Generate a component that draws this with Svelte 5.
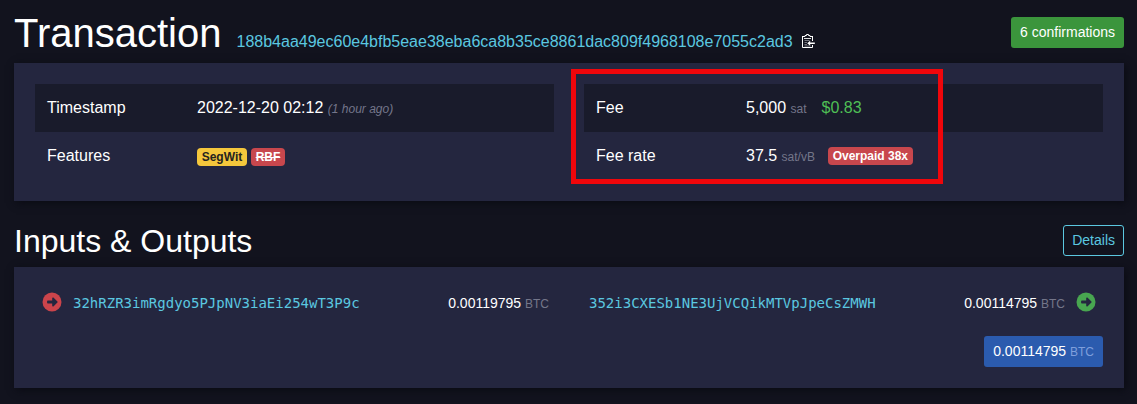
<script>
  const tx = {
    txid: '188b4aa49ec60e4bfb5eae38eba6ca8b35ce8861dac809f4968108e7055c2ad3',
    time: '2022-12-20 02:12',
    ago: '1 hour ago',
    confirmations: 6,
    fee: 5000,
    fiat: '$0.83',
    feeRate: 37.5,
    overpaid: 38
  };

  const inputs = [{ address: '32hRZR3imRgdyo5PJpNV3iaEi254wT3P9c', value: '0.00119795' }];
  const outputs = [{ address: '352i3CXESb1NE3UjVCQikMTVpJpeCsZMWH', value: '0.00114795' }];
  const total = '0.00114795';
</script>

{#snippet arrow(kind)}
  <svg class="arrow {kind}" viewBox="0 0 20 20">
    <circle cx="10" cy="10" r="9.500" />
    <path d="M5.800 8.600h4.400V6.200c0-.8.7-1 1.200-.6l4 3.800c.4.3.4.9 0 1.200l-4 3.800c-.5.4-1.200.2-1.200-.6v-2.400H5.800c-.4 0-.7-.3-.7-.7V9.300c0-.4.3-.7.7-.7z" fill="#24263f" />
  </svg>
{/snippet}

<main>
  <header class="title">
    <h1>Transaction</h1>
    <a class="txid" href="#tx">{tx.txid}</a>
    <svg class="clipboard" viewBox="0 0 14 15">
      <path d="M1.500 3v10.500h10V11M11.500 7V3" fill="none" stroke="#fff" />
      <path d="M1 2.500h3v-1h1.500V.5h2v1H9v1h3" fill="none" stroke="#fff" />
      <path d="M3 4.500h7" stroke="#ddd" />
      <path d="M3.500 6.500h5M3.500 8.500H6M3.500 10.500H6M3.500 12h6" stroke="#8d8e96" stroke-width=".8" />
      <path d="M6.200 9.300l3-2.500v1.800h4.600v1.400H9.200v1.800z" fill="#fff" />
    </svg>
    <button class="btn confirmed">{tx.confirmations} confirmations</button>
  </header>

  <section class="box info">
    <div class="table">
      <div class="row">
        <span class="label">Timestamp</span>
        <span>{tx.time} <i class="symbol">({tx.ago})</i></span>
      </div>
      <div class="row">
        <span class="label">Features</span>
        <span class="badges">
          <span class="badge yellow">SegWit</span>
          <span class="badge red"><del>RBF</del></span>
        </span>
      </div>
    </div>
    <div class="table">
      <div class="row">
        <span class="label">Fee</span>
        <span>{tx.fee.toLocaleString('en-US')} <span class="symbol">sat</span></span>
        <span class="fiat">{tx.fiat}</span>
      </div>
      <div class="row">
        <span class="label">Fee rate</span>
        <span>{tx.feeRate} <span class="symbol">sat/vB</span></span>
        <span class="badge red overpaid">Overpaid {tx.overpaid}x</span>
      </div>
    </div>
    <div class="highlight"></div>
  </section>

  <header class="subtitle">
    <h2>Inputs &amp; Outputs</h2>
    <button class="btn details">Details</button>
  </header>

  <section class="box transfers">
    <div class="columns">
      <div class="side">
        {#each inputs as vin}
          <div class="io">
            {@render arrow('in')}
            <a class="address" href="#address">{vin.address}</a>
            <span class="amount">{vin.value} <span class="symbol">BTC</span></span>
          </div>
        {/each}
      </div>
      <div class="side out">
        {#each outputs as vout}
          <div class="io">
            <a class="address" href="#address">{vout.address}</a>
            <span class="amount">{vout.value} <span class="symbol">BTC</span></span>
            {@render arrow('spent')}
          </div>
        {/each}
      </div>
    </div>
    <div class="summary">
      <button class="btn total">{total} <span class="symbol">BTC</span></button>
    </div>
  </section>
</main>

<style>
  :global(body) { background: #12131e; }
  main {
    box-sizing: border-box;
    height: 404px;
    padding: 9px 13px 0 14px;
    overflow: hidden;
    color: #fff;
    font: 16px/24px "Liberation Sans", Arial, sans-serif;
  }
  h1, h2 { margin: 0; font-weight: 400; }
  h1 { font-size: 40px; line-height: 48px; }
  h2 { font-size: 32px; line-height: 38px; }
  a { color: #5bc8e0; text-decoration: none; }

  .title { display: flex; align-items: baseline; height: 54px; }
  .txid { margin-left: 15px; }
  .clipboard { width: 14px; height: 15px; margin-left: 8px; align-self: flex-start; margin-top: 25px; }

  .btn {
    box-sizing: border-box;
    height: 31px;
    padding: 0 8px;
    border: 1px solid transparent;
    border-radius: 3px;
    color: #fff;
    font: 14px/21px "Liberation Sans", Arial, sans-serif;
    white-space: nowrap;
  }
  .confirmed { align-self: flex-start; margin: 8px 0 0 auto; background: #3b953c; }
  .details { margin-top: 3px; border-color: #5bc8e0; background: none; color: #5bc8e0; }
  .total { background: #2b5bae; }
  .total .symbol { color: #7f9fdc; }

  .box { box-sizing: border-box; background: #24263f; box-shadow: 2px 2px 8px #0a0b13; }
  .info { position: relative; display: grid; grid-template-columns: 1fr 1fr; gap: 30px; height: 138px; padding: 21px; }
  .row { display: flex; align-items: center; height: 48px; padding: 0 12px; }
  .row:first-child { background: #191b2b; }
  .label { width: 150px; }
  .symbol { color: #74768a; font-size: 12px; }
  .fiat { margin-left: 15px; color: #4fbf55; }

  .badges { display: flex; gap: 4px; padding-top: 2px; }
  .badge { height: 18px; padding: 0 4.700px; border-radius: 4px; font-size: 12px; font-weight: 700; line-height: 18px; }
  .yellow { background: #f5c73c; color: #25231f; }
  .red { background: #c8474d; }
  .overpaid { margin-left: 13px; }

  /* frame drawn over the fee rows */
  .highlight { position: absolute; top: 6px; left: 557px; width: 362px; height: 105px; border: 5px solid #f0060b; }

  .subtitle { display: flex; justify-content: space-between; height: 45px; padding-top: 21px; }
  .transfers { height: 121px; padding: 21px; }
  .columns { display: grid; grid-template-columns: 1fr 1fr; gap: 30px; height: 48px; }
  .side { padding: 0 5px 0 7px; }
  .side.out { padding: 0 7px 0 5px; }
  .io { display: flex; align-items: center; height: 30px; font-size: 14px; }
  .address { font-family: "DejaVu Sans Mono", monospace; }
  .amount { margin-left: auto; }
  .arrow { width: 20px; height: 20px; margin-top: -3px; }
  .in { margin-right: 11px; fill: #cb444b; }
  .spent { margin-left: 11px; fill: #48a650; }
  .summary { display: flex; justify-content: flex-end; }
</style>
